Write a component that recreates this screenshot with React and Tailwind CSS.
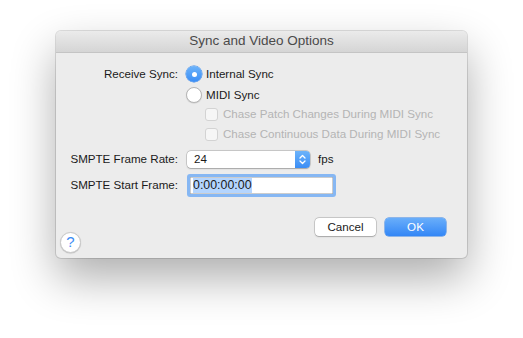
import React from 'react';

const font = { fontFamily: '"Liberation Sans", Arial, sans-serif' };

function Radio({ checked }) {
  if (checked) {
    return (
      <span className="flex h-[16px] w-[16px] shrink-0 items-center justify-center rounded-full bg-gradient-to-b from-[#6cb3fa] to-[#3a8df5] shadow-[0_0_0_0.5px_#2f7fe6]">
        <span className="h-[5px] w-[5px] rounded-full bg-white" />
      </span>
    );
  }
  return (
    <span className="h-[16px] w-[16px] shrink-0 rounded-full border border-[#b5b5b5] bg-white shadow-[0_0.5px_1px_rgba(0,0,0,0.15)]" />
  );
}

function Checkbox() {
  return <span className="h-[13px] w-[13px] shrink-0 rounded-[3px] border border-[#d3d3d3] bg-[#f6f6f6]" />;
}

export default function App() {
  return (
    <div className="h-[338px] w-[523px] bg-white pl-[56px] pt-[31px] text-[11.6px] text-[#1a1a1a]" style={font}>
      <div className="flex h-[227px] w-[411px] flex-col overflow-hidden rounded-[5px] bg-[#ececec] shadow-[0_0_0_1px_rgba(0,0,0,0.12),0_20px_45px_rgba(0,0,0,0.32)]">
        {/* title bar */}
        <div className="flex h-[22px] shrink-0 items-center justify-center border-b border-[#c4c4c4] bg-gradient-to-b from-[#ebebeb] to-[#d5d5d5] text-[13.5px] text-[#4a4a4a]">
          Sync and Video Options
        </div>

        <div className="grid grid-cols-[122px_1fr] gap-x-[8px]">
          <div className="mt-[12px] flex h-[18px] items-center justify-end">Receive Sync:</div>
          <div className="mt-[12px] flex h-[18px] items-center gap-[4px]">
            <Radio checked />
            <span>Internal Sync</span>
          </div>

          <div />
          <div className="mt-[3px] flex h-[18px] items-center gap-[4px]">
            <Radio />
            <span>MIDI Sync</span>
          </div>

          <div />
          <div className="mt-[1px] flex h-[18px] items-center gap-[5px] pl-[19px] text-[#b4b4b4]">
            <Checkbox />
            <span>Chase Patch Changes During MIDI Sync</span>
          </div>

          <div />
          <div className="mt-[2px] flex h-[18px] items-center gap-[5px] pl-[19px] text-[#b4b4b4]">
            <Checkbox />
            <span>Chase Continuous Data During MIDI Sync</span>
          </div>

          <div className="mt-[6px] flex h-[20px] items-center justify-end">SMPTE Frame Rate:</div>
          <div className="mt-[6px] flex h-[20px] items-center gap-[8px]">
            <div className="ml-[1px] flex h-[17px] w-[123px] items-stretch overflow-hidden rounded-[4px] bg-white shadow-[0_0_0_0.5px_rgba(0,0,0,0.25),0_0.5px_1.5px_rgba(0,0,0,0.2)]">
              <span className="flex flex-1 items-center pl-[7px]">24</span>
              <span className="flex w-[15px] items-center justify-center bg-gradient-to-b from-[#6cb3fa] to-[#3a8df5]">
                <svg width="7" height="11" viewBox="0 0 7 11" fill="none" stroke="white" strokeWidth="1.3" strokeLinecap="round" strokeLinejoin="round">
                  <path d="M1 4 L3.5 1.5 L6 4" />
                  <path d="M1 7 L3.5 9.5 L6 7" />
                </svg>
              </span>
            </div>
            <span>fps</span>
          </div>

          <div className="mt-[4px] flex h-[24px] items-center justify-end">SMPTE Start Frame:</div>
          <div className="mt-[4px] flex h-[24px] items-center">
            <div className="ml-[1px] flex h-[23px] w-[149px] items-center rounded-[3px] bg-[#86b7f3] p-[3px]">
              <div className="flex h-full w-full items-center bg-white pl-[3px] shadow-[inset_0_0_0_0.5px_#9a9a9a]">
                <span className="bg-[#b4d5fe] text-[12.4px] leading-[15px]">0:00:00:00</span>
              </div>
            </div>
          </div>
        </div>

        <div className="mt-auto flex items-start justify-between pb-[5px] pl-[4px] pr-[21px]">
          <div className="mt-[14px] flex h-[21px] w-[21px] items-center justify-center rounded-full border border-[#c8c8c8] bg-white text-[15px] text-[#3b8cf5] shadow-[0_0.5px_1px_rgba(0,0,0,0.2)]">
            ?
          </div>
          <div className="flex gap-[9px]">
            <button className="flex h-[18px] w-[61px] items-center justify-center rounded-[4px] bg-white text-[11.6px] shadow-[0_0_0_0.5px_rgba(0,0,0,0.25),0_0.5px_1.5px_rgba(0,0,0,0.2)]">
              Cancel
            </button>
            <button className="flex h-[18px] w-[61px] items-center justify-center rounded-[4px] bg-gradient-to-b from-[#69aefa] to-[#3286f6] text-[11.6px] text-white shadow-[0_0_0_0.5px_#2f7fe6]">
              OK
            </button>
          </div>
        </div>
      </div>
    </div>
  );
}
